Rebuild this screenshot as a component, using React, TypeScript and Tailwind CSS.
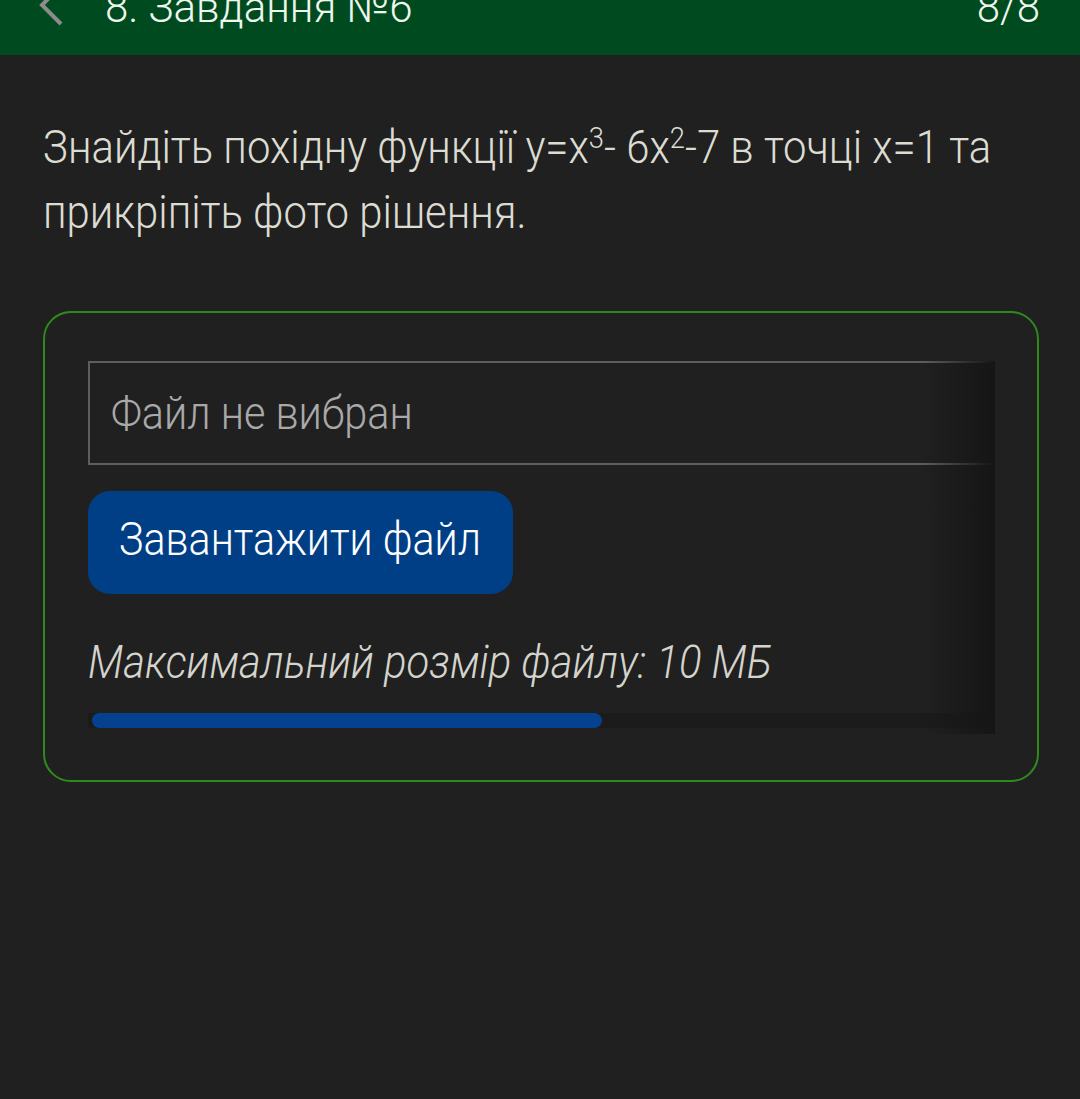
import React from "react";

export default function App() {
  const font = { fontFamily: "Roboto, 'Noto Sans', sans-serif" };
  return (
    <div className="w-[1080px] h-[1099px] bg-[#202020] overflow-hidden" style={font}>
      <div className="h-[55px] bg-[#004a20] overflow-hidden relative">
        <div className="flex items-center h-[42px] -mt-[13px] pl-[37px] pr-[40px]">
          <svg width="28" height="42" viewBox="0 0 28 42" className="shrink-0 overflow-visible">
            <polyline points="24,-1 5,18 24,37" fill="none" stroke="#8c8c8c" strokeWidth="4" />
          </svg>
          <span className="ml-[40px] text-[42px] leading-[42px] font-light text-[#eef7ee]">8. Завдання №6</span>
          <span className="ml-auto text-[42px] leading-[42px] font-light text-[#eef7ee]">8/8</span>
        </div>
      </div>

      <div className="px-[43px] pt-[60px]">
        <p className="w-[1092px] origin-left scale-x-[0.91] text-[46px] leading-[65px] font-light text-[#dcdcd2]">
          Знайдіть похідну функції у=х<sup className="text-[30px]">3</sup>- 6х<sup className="text-[30px]">2</sup>-7 в точці х=1 та прикріпіть фото рішення.
        </p>

        <div className="mt-[66px] w-[996px] h-[471px] border-2 border-[#2f8a1c] rounded-[28px] pt-[48px] pl-[43px] pr-[42px]">
          <div className="relative">
            <div className="h-[104px] border-2 border-[#5e5e5e] flex items-center pl-[21px]">
              <span className="inline-block origin-left scale-x-[0.9] text-[46px] font-light text-[#a9a9a9] whitespace-nowrap">Файл не вибран</span>
            </div>
            <button className="mt-[26px] w-[425px] h-[103px] rounded-[22px] bg-[#003f86] flex items-center pl-[31px] pb-[6px]">
              <span className="inline-block origin-left scale-x-[0.895] text-[46px] font-light text-white whitespace-nowrap">Завантажити файл</span>
            </button>
            <div className="mt-[41px] h-[54px] leading-[54px]">
              <span className="inline-block origin-left scale-x-[0.91] text-[46px] font-light italic text-[#d4d4cc] whitespace-nowrap">
                Максимальний розмір файлу: 10 МБ
              </span>
            </div>
            <div className="mt-[24px] h-[15px] bg-[#1b1b1b] flex items-start pl-[4px]">
              <div className="h-[15px] w-[510px] rounded-full bg-[#064190]"></div>
            </div>
            <div className="absolute top-0 right-0 w-[72px] h-[373px] bg-gradient-to-r from-transparent to-[#151515] pointer-events-none"></div>
          </div>
        </div>
      </div>
    </div>
  );
}
